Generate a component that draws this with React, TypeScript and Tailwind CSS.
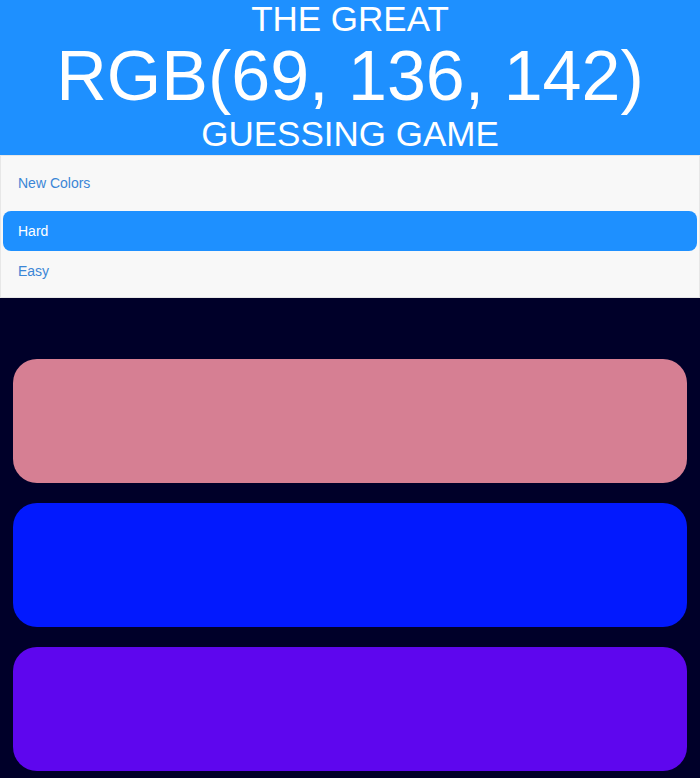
import React from "react";

const squares = ["#d67f93", "#0219fe", "#5e06ee"];

const App: React.FC = () => {
  return (
    <div className="min-h-[778px] bg-[#000029] font-[family-name:Liberation_Sans,Arial,sans-serif]">
      {/* title */}
      <div className="h-[155px] bg-[#1e90ff] text-center uppercase text-white">
        <div className="text-[35px] leading-[37px]">The Great</div>
        <div className="text-[70px] leading-[78px]">RGB(69, 136, 142)</div>
        <div className="text-[35px] leading-[37px]">Guessing Game</div>
      </div>

      {/* nav */}
      <div className="border border-[#e7e7e7] bg-[#f8f8f8] px-[2px] pt-[7px] pb-[6px] text-[14px] leading-5">
        <div className="px-[15px] py-[10px] text-[#3b86d6]">New Colors</div>
        <div className="mt-2 rounded-lg bg-[#1e90ff] px-[15px] py-[10px] text-white">
          Hard
        </div>
        <div className="px-[15px] py-[10px] text-[#3b86d6]">Easy</div>
      </div>

      {/* squares */}
      <div className="flex flex-col gap-5 px-[13px] pt-[61px] pb-5">
        {squares.map((color, index) => (
          <div
            key={index}
            className="h-[124px] rounded-[24px]"
            style={{ backgroundColor: color }}
          />
        ))}
      </div>
    </div>
  );
};

export default App;
